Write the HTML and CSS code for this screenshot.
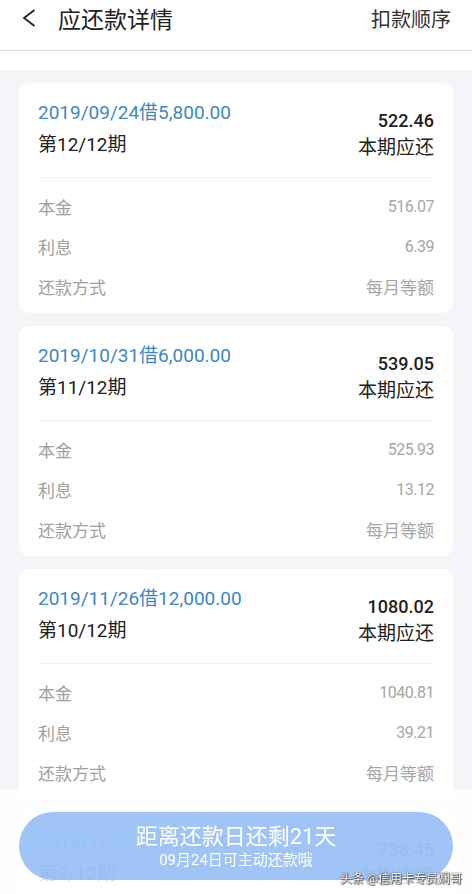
FILE: index.html
```html
<!DOCTYPE html>
<html lang="zh-CN">
<head>
    <meta charset="UTF-8">
    <meta name="viewport" content="width=device-width, initial-scale=1.0">
    <title>应还款详情</title>
    <link rel="stylesheet" href="styles.css">
</head>
<body>

<header class="topbar">
    <div class="topbar-left">
        <svg class="back" width="14" height="18" viewBox="0 0 14 18">
            <polyline points="12.5,1 2,9 12.5,17" fill="none" stroke="#222" stroke-width="1.8" stroke-linejoin="miter"/>
        </svg>
        <h1 class="title">应还款详情</h1>
    </div>
    <span class="order">扣款顺序</span>
</header>
<div class="gap-white"></div>

<main class="list">
    <section class="card">
        <div class="card-top">
            <div class="card-left">
                <div class="loan">2019/09/24借5,800.00</div>
                <div class="period">第12/12期</div>
            </div>
            <div class="card-right">
                <div class="amount">522.46</div>
                <div class="amount-label">本期应还</div>
            </div>
        </div>
        <ul class="rows">
            <li><span>本金</span><span class="val">516.07</span></li>
            <li><span>利息</span><span class="val">6.39</span></li>
            <li><span>还款方式</span><span class="val cjk">每月等额</span></li>
        </ul>
    </section>

    <section class="card">
        <div class="card-top">
            <div class="card-left">
                <div class="loan">2019/10/31借6,000.00</div>
                <div class="period">第11/12期</div>
            </div>
            <div class="card-right">
                <div class="amount">539.05</div>
                <div class="amount-label">本期应还</div>
            </div>
        </div>
        <ul class="rows">
            <li><span>本金</span><span class="val">525.93</span></li>
            <li><span>利息</span><span class="val">13.12</span></li>
            <li><span>还款方式</span><span class="val cjk">每月等额</span></li>
        </ul>
    </section>

    <section class="card">
        <div class="card-top">
            <div class="card-left">
                <div class="loan">2019/11/26借12,000.00</div>
                <div class="period">第10/12期</div>
            </div>
            <div class="card-right">
                <div class="amount">1080.02</div>
                <div class="amount-label">本期应还</div>
            </div>
        </div>
        <ul class="rows">
            <li><span>本金</span><span class="val">1040.81</span></li>
            <li><span>利息</span><span class="val">39.21</span></li>
            <li><span>还款方式</span><span class="val cjk">每月等额</span></li>
        </ul>
    </section>

    <section class="card">
        <div class="card-top">
            <div class="card-left">
                <div class="loan">2019/12/25借8,000.00</div>
                <div class="period">第9/12期</div>
            </div>
            <div class="card-right">
                <div class="amount">738.45</div>
                <div class="amount-label">本期应还</div>
            </div>
        </div>
        <ul class="rows">
            <li><span>本金</span><span class="val">712.30</span></li>
            <li><span>利息</span><span class="val">26.15</span></li>
            <li><span>还款方式</span><span class="val cjk">每月等额</span></li>
        </ul>
    </section>
</main>

<!-- faixa de baixo fica por cima da lista -->
<div class="bottom-fade"></div>
<button class="remind">
    <span class="remind-title">距离还款日还剩21天</span>
    <span class="remind-sub">09月24日可主动还款哦</span>
</button>
<div class="watermark">头条 @信用卡专员娴哥</div>

</body>
</html>
```

FILE: styles.css
```css
body{
    margin: 0;
    padding: 0;
    font-family: Roboto, "Noto Sans CJK SC", sans-serif;
    background-color: #f4f5f9;
    color: #222;
}

.topbar{
    display: flex;
    align-items: center;
    justify-content: space-between;
    height: 36px;
    padding: 0 21px 14px 22px;
    background-color: white;
    border-bottom: 1px solid #dcdcdc;
}

.topbar-left{
    display: flex;
    align-items: center;
}

.back{
    display: block;
    margin-right: 22px;
}

.title{
    margin: 0;
    font-size: 23px;
    font-weight: 400;
    color: #222;
}

.order{
    font-size: 20px;
    color: #333;
}

.gap-white{
    height: 19px;
    background-color: white;
}

.list{
    display: flex;
    flex-direction: column;
    gap: 13px;
    padding: 13px 19px;
}

.card{
    background-color: white;
    border-radius: 10px;
    padding: 0 19px 7px;
}

.card-top{
    display: flex;
    justify-content: space-between;
    align-items: flex-end;
    padding: 14px 0 16px;
    border-bottom: 1px solid #f1f1f3;
}

.loan{
    font-size: 19px;
    line-height: 32px;
    color: #3d87c5;
}

.period{
    font-size: 19px;
    line-height: 32px;
    color: #222;
}

.card-right{
    text-align: right;
}

.amount{
    font-size: 18px;
    font-weight: 500;
    line-height: 27px;
    color: #222;
}

.amount-label{
    font-size: 19px;
    line-height: 27px;
    color: #222;
}

.rows{
    list-style: none;
    margin: 0;
    padding: 8px 0 0;
}

.rows li{
    display: flex;
    justify-content: space-between;
    align-items: center;
    height: 40px;
    font-size: 17px;
    color: #a0a0a0;
}

.val{
    font-size: 16px;
    letter-spacing: -0.5px;
    color: #a6a6a6;
}

.val.cjk{
    font-size: 17px;
    letter-spacing: 0;
}

.bottom-fade{
    position: fixed;
    left: 0;
    right: 0;
    bottom: 0;
    height: 104px;
    background-color: rgba(255, 255, 255, 0.86);
}

.remind{
    position: fixed;
    left: 19px;
    right: 19px;
    bottom: 14px;
    height: 68px;
    display: flex;
    flex-direction: column;
    align-items: center;
    padding: 11px 0 0;
    border: none;
    border-radius: 34px;
    background-color: rgba(128, 176, 242, 0.75);
    color: white;
    font-family: Roboto, "Noto Sans CJK SC", sans-serif;
}

.remind-title{
    font-size: 22px;
    line-height: 28px;
}

.remind-sub{
    font-size: 15px;
    line-height: 18px;
}

.watermark{
    position: fixed;
    right: 10px;
    bottom: 8px;
    font-family: "Noto Sans CJK SC", sans-serif;
    font-size: 12px;
    line-height: 16px;
    color: white;
    text-shadow: 0 0 1px #333, 0 0 1px #333, 1px 1px 1px #555;
}
```
